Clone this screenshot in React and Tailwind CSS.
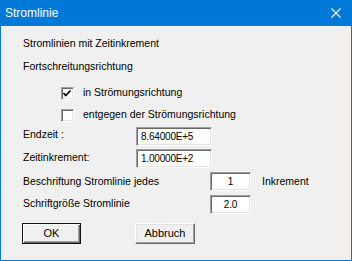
const sunken =
  'border border-t-[#a0a0a0] border-l-[#a0a0a0] border-b-white border-r-white bg-white shadow-[inset_1px_1px_0_#696969,inset_-1px_-1px_0_#e3e3e3]';

function Field({ value, className = '', center = false }) {
  return (
    <div
      className={`${sunken} h-[19px] flex items-center text-[10px] tracking-[-0.2px] ${
        center ? 'justify-center' : 'pl-[4px]'
      } ${className}`}
    >
      {value}
    </div>
  );
}

function CheckBox({ checked }) {
  return (
    <div className={`${sunken} w-[13px] h-[13px] shrink-0`}>
      {checked && (
        <svg width="11" height="11" viewBox="0 0 11 11">
          <polyline points="1.5,5 3.8,7.5 8.5,2.5" fill="none" stroke="#000" strokeWidth="1.8" />
        </svg>
      )}
    </div>
  );
}

export default function App() {
  return (
    <div
      className="w-[352px] h-[261px] bg-[#f0f0f0] text-black flex flex-col overflow-hidden"
      style={{ fontFamily: '"Liberation Sans", Arial, sans-serif' }}
    >
      {/* title bar */}
      <div className="h-[26px] bg-[#0078d7] text-white flex items-center justify-between pl-[5px] pr-[11px] shrink-0">
        <span className="text-[12px]">Stromlinie</span>
        <svg width="10" height="10" viewBox="0 0 10 10">
          <path d="M0.5 0.5 L9.5 9.5 M9.5 0.5 L0.5 9.5" stroke="#fff" strokeWidth="1.1" />
        </svg>
      </div>

      <div className="flex-1 border-x border-b border-[#0078d7] pl-[22px] flex flex-col text-[10.5px]">
        <div className="h-[20px] mt-[8px] flex items-center">Stromlinien mit Zeitinkrement</div>
        <div className="h-[20px] mt-[3px] flex items-center">Fortschreitungsrichtung</div>

        <div className="h-[20px] mt-[6px] flex items-center gap-[9px] ml-[38px]">
          <CheckBox checked />
          <span>in Strömungsrichtung</span>
        </div>
        <div className="h-[20px] mt-[2px] flex items-center gap-[9px] ml-[38px]">
          <CheckBox />
          <span>entgegen der Strömungsrichtung</span>
        </div>

        <div className="h-[19px] mt-[2px] flex items-center">
          <span className="w-[113px] mb-[3px]">Endzeit :</span>
          <Field value="8.64000E+5" className="w-[76px]" />
        </div>
        <div className="h-[19px] mt-[3px] flex items-center">
          <span className="w-[113px] mb-[1px]">Zeitinkrement:</span>
          <Field value="1.00000E+2" className="w-[76px]" />
        </div>
        <div className="h-[19px] mt-[4px] flex items-center">
          <span className="w-[187px]">Beschriftung Stromlinie jedes</span>
          <Field value="1" center className="w-[41px]" />
          <span className="ml-[11px]">Inkrement</span>
        </div>
        <div className="h-[19px] mt-[4px] flex items-center">
          <span className="w-[187px] mb-[1px]">Schriftgröße Stromlinie</span>
          <Field value="2.0" center className="w-[41px]" />
        </div>

        <div className="mt-[9px] -ml-[1px] flex items-center">
          <button className="w-[59px] h-[21px] bg-[#f0f0f0] border border-[#111] shadow-[inset_1px_1px_0_#fff,inset_-1px_-1px_0_#696969,inset_-2px_-2px_0_#a0a0a0] text-[11px] flex items-center justify-center">
            OK
          </button>
          <button className="ml-[54px] w-[60px] h-[21px] bg-[#f0f0f0] border border-t-white border-l-white border-r-[#696969] border-b-[#696969] shadow-[inset_-1px_-1px_0_#a0a0a0,inset_1px_1px_0_#e3e3e3] text-[11px] flex items-center justify-center">
            Abbruch
          </button>
        </div>
      </div>
    </div>
  );
}
